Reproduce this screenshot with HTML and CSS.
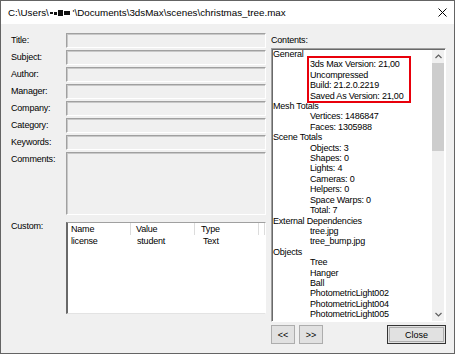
FILE: index.html
```html
<!DOCTYPE html>
<html>

<head>
  <meta http-equiv="Content-Type" content="text/html; charset=UTF-8">
  <title>File Properties</title>
  <link rel="stylesheet" href="styles.css">
</head>

<body>

  <div class="window">

    <div class="titlebar">
      <span class="caption">C:\Users\<span class="redact"><i class="r1"></i><i class="r2"></i><i class="r3"></i><i class="r4"></i></span> '\Documents\3dsMax\scenes\christmas_tree.max</span>
      <svg class="close-x" width="9" height="9" viewBox="0 0 9 9">
        <path d="M0.5 0.5 L8.5 8.5 M8.5 0.5 L0.5 8.5" stroke="#000" stroke-width="1" fill="none" />
      </svg>
    </div>

    <div class="client">

      <!-- propiedades de resumen -->
      <div class="fields">
        <span class="lbl">Title:</span>
        <div class="edit"></div>
        <span class="lbl">Subject:</span>
        <div class="edit"></div>
        <span class="lbl">Author:</span>
        <div class="edit"></div>
        <span class="lbl">Manager:</span>
        <div class="edit"></div>
        <span class="lbl">Company:</span>
        <div class="edit"></div>
        <span class="lbl">Category:</span>
        <div class="edit"></div>
        <span class="lbl">Keywords:</span>
        <div class="edit"></div>
        <span class="lbl">Comments:</span>
        <div class="edit"></div>
        <span class="lbl custom-lbl">Custom:</span>
        <div class="listview">
          <div class="lv-head">
            <span class="col c-name">Name</span>
            <span class="col c-value">Value</span>
            <span class="col c-type">Type</span>
            <span class="col c-rest"></span>
          </div>
          <div class="lv-row">
            <span class="c-name">license</span>
            <span class="c-value">student</span>
            <span class="c-type">Text</span>
          </div>
        </div>
      </div>

      <!-- contenido -->
      <div class="contents">
        <span class="lbl">Contents:</span>
        <div class="listbox">
          <div class="items">
            <div>General</div>
            <div class="sub">3ds Max Version: 21,00</div>
            <div class="sub">Uncompressed</div>
            <div class="sub">Build: 21.2.0.2219</div>
            <div class="sub">Saved As Version: 21,00</div>
            <div>Mesh Totals</div>
            <div class="sub">Vertices: 1486847</div>
            <div class="sub">Faces: 1305988</div>
            <div>Scene Totals</div>
            <div class="sub">Objects: 3</div>
            <div class="sub">Shapes: 0</div>
            <div class="sub">Lights: 4</div>
            <div class="sub">Cameras: 0</div>
            <div class="sub">Helpers: 0</div>
            <div class="sub">Space Warps: 0</div>
            <div class="sub">Total: 7</div>
            <div>External Dependencies</div>
            <div class="sub">tree.jpg</div>
            <div class="sub">tree_bump.jpg</div>
            <div>Objects</div>
            <div class="sub">Tree</div>
            <div class="sub">Hanger</div>
            <div class="sub">Ball</div>
            <div class="sub">PhotometricLight002</div>
            <div class="sub">PhotometricLight004</div>
            <div class="sub">PhotometricLight005</div>
          </div>
          <div class="scrollbar">
            <svg class="arrow" width="7" height="5" viewBox="0 0 7 5">
              <path d="M0.5 4 L3.5 1 L6.5 4" stroke="#606060" stroke-width="1.2" fill="none" />
            </svg>
            <div class="thumb"></div>
            <div class="track"></div>
            <svg class="arrow" width="7" height="5" viewBox="0 0 7 5">
              <path d="M0.5 1 L3.5 4 L6.5 1" stroke="#606060" stroke-width="1.2" fill="none" />
            </svg>
          </div>
          <div class="highlight"></div>
        </div>
        <div class="buttons">
          <button class="btn small">&lt;&lt;</button>
          <button class="btn small">&gt;&gt;</button>
          <button class="btn close">Close</button>
        </div>
      </div>

    </div>
  </div>

</body>

</html>
```

FILE: styles.css
```css
body {
  margin: 0;
  font-family: "Liberation Sans", Arial, sans-serif;
  font-size: 9px;
  letter-spacing: -0.2px;
  color: #000;
}

.window {
  width: 455px;
  height: 354px;
  box-sizing: border-box;
  border: 1px solid #646464;
  background: #f0f0f0;
}

.titlebar {
  height: 23px;
  background: #fff;
  display: flex;
  align-items: center;
  justify-content: space-between;
  padding: 0 7px 0 7px;
}

.caption {
  font-size: 9.8px;
  letter-spacing: 0;
}

.redact {
  display: inline-flex;
  align-items: center;
  gap: 1px;
  margin: 0 0 0 1px;
  vertical-align: middle;
}

.redact i {
  display: inline-block;
  background: #111;
}

.r1 { width: 3px; height: 2px; }
.r2 { width: 3px; height: 3px; }
.r3 { width: 5px; height: 6px; }
.r4 { width: 6px; height: 4px; }

.close-x {
  margin-top: -1px;
}

.client {
  display: grid;
  grid-template-columns: 255px 175px;
  column-gap: 5px;
  padding: 9px 0 0 10px;
}

/* Columna izquierda */
.fields {
  display: grid;
  grid-template-columns: 55px 200px;
  grid-template-rows: repeat(7, 15px) 63px 97px;
  row-gap: 2px;
}

.lbl {
  line-height: 15px;
}

.edit {
  box-sizing: border-box;
  border-top: 1px solid #a0a0a0;
  border-left: 1px solid #a0a0a0;
  border-right: 1px solid #fff;
  border-bottom: 1px solid #fff;
  box-shadow: inset 1px 1px 0 #c8c8c8;
}

.custom-lbl {
  margin-top: 2px;
}

.listview {
  margin-top: 5px;
  box-sizing: border-box;
  background: #fff;
  border-top: 1px solid #a0a0a0;
  border-left: 2px solid #696969;
  border-right: 1px solid #fff;
  border-bottom: 1px solid #e3e3e3;
}

.lv-head {
  display: flex;
  height: 12px;
  line-height: 12px;
}

.lv-head .col {
  box-sizing: border-box;
  border-right: 1px solid #dcdcdc;
}

.c-name {
  width: 64px;
  padding-left: 3px;
  box-sizing: border-box;
}

.c-value {
  width: 65px;
  padding-left: 5px;
  box-sizing: border-box;
}

.c-type {
  width: 65px;
  padding-left: 6px;
  box-sizing: border-box;
}

.c-rest {
  width: 6px;
}

.lv-row {
  display: flex;
  line-height: 11px;
  margin-top: 1px;
}

/* Columna derecha */
.contents {
  display: flex;
  flex-direction: column;
}

.contents .lbl {
  height: 15px;
}

.listbox {
  position: relative;
  display: flex;
  height: 274px;
  box-sizing: border-box;
  background: #fff;
  border-top: 1px solid #a0a0a0;
  border-left: 1px solid #a0a0a0;
  border-right: 1px solid #fff;
  border-bottom: 1px solid #fff;
  box-shadow: inset 1px 1px 0 #696969;
}

.items {
  flex: 1;
  padding: 0 0 0 1px;
  line-height: 10.4px;
  white-space: nowrap;
  overflow: hidden;
}

.items .sub {
  padding-left: 37px;
}

.scrollbar {
  width: 12px;
  margin: 1px 1px 0 0;
  background: #f0f0f0;
  display: flex;
  flex-direction: column;
  align-items: center;
}

.arrow {
  margin: 4px 0;
}

.thumb {
  width: 12px;
  height: 88px;
  background: #cdcdcd;
}

.track {
  flex: 1;
}

.highlight {
  position: absolute;
  left: 35px;
  top: 7px;
  width: 104px;
  height: 47px;
  box-sizing: border-box;
  border: 2px solid #e8000b;
}

.buttons {
  display: flex;
  gap: 4px;
  margin-top: 3px;
}

.btn {
  height: 19px;
  box-sizing: border-box;
  background: #e1e1e1;
  border: 1px solid #adadad;
  font-family: inherit;
  font-size: 9px;
  padding: 0;
}

.small {
  width: 24px;
}

.close {
  width: 59px;
  margin-left: auto;
  border: 1px solid #333;
  box-shadow: inset 0 0 0 1px #e1e1e1, inset 0 0 0 2px #adadad;
}
```
